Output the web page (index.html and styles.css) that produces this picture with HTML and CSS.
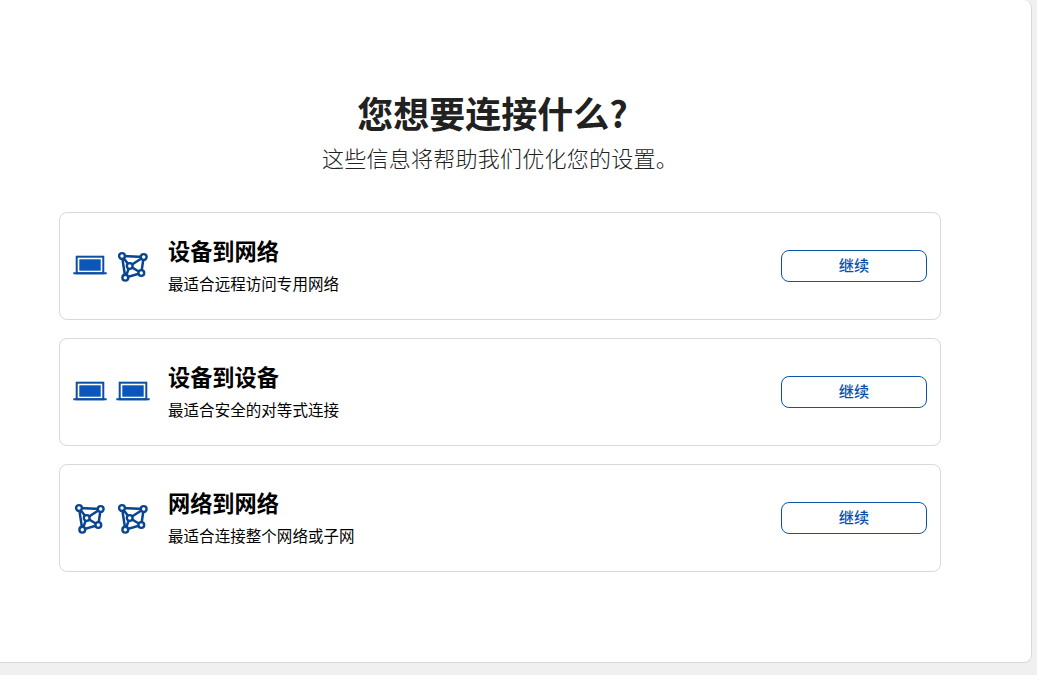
FILE: index.html
```html
<!DOCTYPE html>
<html lang="zh-CN">
<head>
<meta charset="utf-8">
<title>您想要连接什么?</title>
<link rel="stylesheet" href="styles.css">
</head>
<body>
<svg class="defs" width="0" height="0" aria-hidden="true">
  <symbol id="laptop" viewBox="-1 0 34 32">
    <rect x="2.7" y="6.7" width="26.6" height="16.6" fill="none" stroke="#0b4ea2" stroke-width="2"/>
    <rect x="5.3" y="9.3" width="21.4" height="11.4" fill="#0b55bb"/>
    <path d="M-0.7 23.3H32.7" stroke="#0b4ea2" stroke-width="2" fill="none"/>
  </symbol>
  <symbol id="network" viewBox="0 0 32 32">
    <path d="M5 6L26.7 7L24.3 23L8.3 27.7ZM5 6L12.7 16L24.3 23M26.7 7L12.7 16L8.3 27.7" fill="none" stroke="#0a4690" stroke-width="2.5"/>
    <g fill="#fff" stroke="#0a4690" stroke-width="2.4">
      <circle cx="5" cy="6" r="2.9"/>
      <circle cx="26.7" cy="7" r="2.9"/>
      <circle cx="12.7" cy="16" r="2.9"/>
      <circle cx="24.3" cy="23" r="2.9"/>
      <circle cx="8.3" cy="27.7" r="2.9"/>
    </g>
  </symbol>
</svg>
<main class="panel">
  <header class="intro">
    <h1 class="title">您想要连接什么?</h1>
    <p class="subtitle">这些信息将帮助我们优化您的设置。</p>
  </header>
  <section class="cards">
    <article class="card">
      <div class="icons">
        <svg class="icon-laptop"><use href="#laptop"/></svg>
        <svg class="icon-network"><use href="#network"/></svg>
      </div>
      <div class="text">
        <h2 class="card-title">设备到网络</h2>
        <p class="card-desc">最适合远程访问专用网络</p>
      </div>
      <button class="go">继续</button>
    </article>
    <article class="card">
      <div class="icons">
        <svg class="icon-laptop"><use href="#laptop"/></svg>
        <svg class="icon-laptop"><use href="#laptop"/></svg>
      </div>
      <div class="text">
        <h2 class="card-title">设备到设备</h2>
        <p class="card-desc">最适合安全的对等式连接</p>
      </div>
      <button class="go">继续</button>
    </article>
    <article class="card">
      <div class="icons">
        <svg class="icon-network"><use href="#network"/></svg>
        <svg class="icon-network"><use href="#network"/></svg>
      </div>
      <div class="text">
        <h2 class="card-title">网络到网络</h2>
        <p class="card-desc">最适合连接整个网络或子网</p>
      </div>
      <button class="go">继续</button>
    </article>
  </section>
</main>
</body>
</html>
```
FILE: styles.css
```css
* { box-sizing: border-box; }
html, body { margin: 0; height: 100%; }
body {
  background: #f0f0f0;
  font-family: "Noto Sans CJK SC", "Noto Sans", sans-serif;
  overflow: hidden;
}
.defs { display: block; height: 0; }
.panel {
  width: 1032px;
  height: 663px;
  background: #fff;
  border-right: 1px solid #d9d9d9;
  border-bottom: 1px solid #d9d9d9;
  border-radius: 0 8px 8px 0;
  padding: 87px 90px 0 59px;
}
.intro { text-align: center; }
.title {
  margin: 0 15px 0 0;
  font-size: 36px;
  line-height: 50px;
  font-weight: 700;
  color: #212121;
}
.subtitle {
  margin: 2px 0 0;
  font-size: 22px;
  letter-spacing: 0.25px;
  line-height: 37px;
  font-weight: 300;
  color: #212121;
}
.cards {
  display: flex;
  flex-direction: column;
  gap: 18px;
  margin-top: 36px;
}
.card {
  height: 108px;
  display: flex;
  align-items: center;
  padding: 0 13px 0 14px;
  border: 1px solid #d9d9d9;
  border-radius: 8px;
  background: #fff;
}
.icons {
  width: 94px;
  display: flex;
  align-items: center;
  gap: 11px;
}
.icon-laptop { width: 34px; height: 32px; margin: 0 -1px; flex: none; }
.icon-network { width: 32px; height: 32px; flex: none; }
.text { flex: 1; margin-top: -4px; }
.card-title {
  margin: 0;
  font-size: 22.2px;
  line-height: 30px;
  font-weight: 700;
  color: #000;
}
.card-desc {
  margin: 7px 0 0;
  font-size: 15.5px;
  letter-spacing: 0.05px;
  line-height: 22px;
  color: #000;
}
.go {
  width: 146px;
  height: 32px;
  padding: 0 0 5px;
  background: #fff;
  border: 1px solid #0b55a8;
  border-radius: 8px;
  color: #0a50ab;
  font: 500 15.2px/20px "Noto Sans CJK SC", sans-serif;
}
```
